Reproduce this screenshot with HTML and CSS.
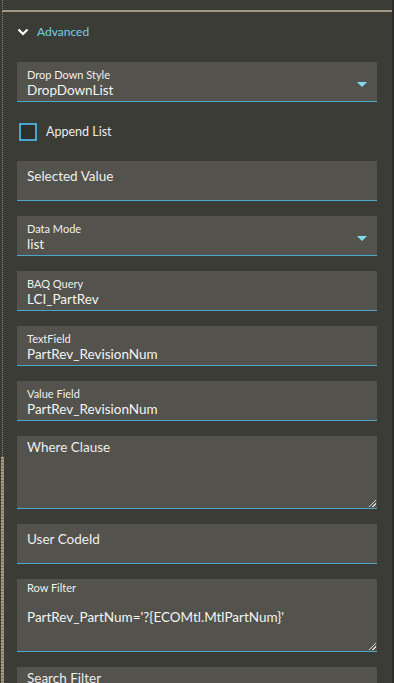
FILE: index.html
```html
<!DOCTYPE html>
<html>
<head>
<meta charset="utf-8">
<link rel="stylesheet" href="styles.css">
</head>
<body>
<div class="panel">
  <div class="rule"></div>
  <div class="section-header">
    <svg class="chevron" width="12" height="8" viewBox="0 0 12 8"><path d="M1.5 1.5 L6 6 L10.5 1.5" fill="none" stroke="#ffffff" stroke-width="2.2"/></svg>
    <span class="section-title">Advanced</span>
  </div>
  <div class="fields">
    <div class="field">
      <div class="label">Drop Down Style</div>
      <div class="value">DropDownList</div>
      <span class="caret"></span>
    </div>
    <label class="check">
      <span class="box"></span>
      <span class="check-text">Append List</span>
    </label>
    <div class="field">
      <div class="placeholder">Selected Value</div>
    </div>
    <div class="field">
      <div class="label">Data Mode</div>
      <div class="value">list</div>
      <span class="caret"></span>
    </div>
    <div class="field">
      <div class="label">BAQ Query</div>
      <div class="value">LCI_PartRev</div>
    </div>
    <div class="field">
      <div class="label">TextField</div>
      <div class="value">PartRev_RevisionNum</div>
    </div>
    <div class="field">
      <div class="label">Value Field</div>
      <div class="value">PartRev_RevisionNum</div>
    </div>
    <div class="field area">
      <div class="placeholder area-ph">Where Clause</div>
      <span class="grip"></span>
    </div>
    <div class="field">
      <div class="placeholder">User CodeId</div>
    </div>
    <div class="field area">
      <div class="label area-label">Row Filter</div>
      <div class="value area-value">PartRev_PartNum='?{ECOMtl.MtlPartNum}'</div>
      <span class="grip"></span>
    </div>
    <div class="field area">
      <div class="placeholder area-ph">Search Filter</div>
      <span class="grip"></span>
    </div>
  </div>
  <div class="scroll-thumb"></div>
</div>
</body>
</html>
```

FILE: styles.css
```css
html, body {
  margin: 0;
  padding: 0;
  background: #2c2c29;
  height: 683px;
  overflow: hidden;
}
.panel {
  position: relative;
  width: 392px;
  height: 683px;
  overflow: hidden;
  background: #3c3c36;
  box-sizing: border-box;
  padding-top: 10px;
  font-family: Lato, "Noto Sans", sans-serif;
  color: #ececea;
}
.panel::before {
  content: "";
  position: absolute;
  left: 2px;
  top: 0;
  bottom: 0;
  border-left: 1px dotted #8c826d;
}
.scroll-thumb {
  position: absolute;
  left: 1px;
  top: 457px;
  width: 3px;
  height: 226px;
  background: repeating-linear-gradient(#a89b84 0 2px, #7d735f 2px 3px);
}
.rule {
  height: 2px;
  margin-left: 2px;
  background: #a39884;
}
.section-header {
  display: flex;
  align-items: center;
  height: 40px;
  padding-left: 17px;
  gap: 8px;
}
.chevron {
  display: block;
}
.section-title {
  color: #72d0e4;
  font-size: 12px;
  margin-top: -2px;
}
.fields {
  display: flex;
  flex-direction: column;
  gap: 15px;
  margin-top: 10px;
  padding-left: 17px;
  width: 360px;
}
.field {
  position: relative;
  flex: none;
  height: 40px;
  box-sizing: border-box;
  background: #53524c;
  border-bottom: 1px solid #4aa7cf;
  padding: 6px 10px 0 10px;
}
.field.area {
  height: 73px;
}
.label {
  font-size: 11px;
  line-height: 13px;
  color: #f0f0ee;
}
.area-label {
  margin-top: -4px;
}
.value {
  font-size: 13.5px;
  line-height: 17px;
  color: #f4f4f2;
  margin-top: 1px;
}
.area-value {
  margin-top: 15px;
}
.placeholder {
  font-size: 13.5px;
  line-height: 17px;
  padding-top: 1px;
  color: #eeeeec;
}
.area-ph {
  padding-top: 0;
  margin-top: -3px;
}
.caret {
  position: absolute;
  right: 10px;
  top: 20px;
  width: 0;
  height: 0;
  border-left: 5px solid transparent;
  border-right: 5px solid transparent;
  border-top: 5px solid #82dcf0;
}
.grip {
  position: absolute;
  right: 1px;
  bottom: 1px;
  width: 7px;
  height: 7px;
  background: linear-gradient(135deg, transparent 0 45%, #d8d8d4 45% 55%, transparent 55% 70%, #d8d8d4 70% 80%, transparent 80%);
}
.check {
  display: flex;
  align-items: center;
  gap: 9px;
  height: 29px;
  padding-left: 2px;
}
.box {
  width: 18px;
  height: 18px;
  box-sizing: border-box;
  border: 2px solid #4ba6cc;
  background: #2e2e2b;
}
.check-text {
  font-size: 12.5px;
  color: #ececea;
}
```
